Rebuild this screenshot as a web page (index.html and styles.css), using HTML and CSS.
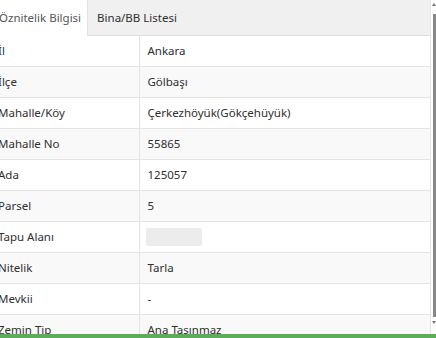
FILE: index.html
```html
<!DOCTYPE html>
<html lang="tr">
<head>
    <meta charset="UTF-8">
    <meta name="viewport" content="width=device-width, initial-scale=1.0">
    <title>Parsel Bilgisi</title>
    <link rel="stylesheet" href="styles.css">
</head>
<body>
    <div class="frame">
        <div class="panel">
            <ul class="tabs">
                <li class="tab active">Öznitelik Bilgisi</li>
                <li class="tab">Bina/BB Listesi</li>
            </ul>

            <table class="info">
                <tbody>
                    <tr><td>İl</td><td>Ankara</td></tr>
                    <tr><td>İlçe</td><td>Gölbaşı</td></tr>
                    <tr><td>Mahalle/Köy</td><td>Çerkezhöyük(Gökçehüyük)</td></tr>
                    <tr><td>Mahalle No</td><td>55865</td></tr>
                    <tr><td>Ada</td><td>125057</td></tr>
                    <tr><td>Parsel</td><td>5</td></tr>
                    <tr><td>Tapu Alanı</td><td><span class="blurred"></span></td></tr>
                    <tr><td>Nitelik</td><td>Tarla</td></tr>
                    <tr><td>Mevkii</td><td>-</td></tr>
                    <tr><td>Zemin Tip</td><td>Ana Taşınmaz</td></tr>
                </tbody>
            </table>
        </div>

        <div class="scrollbar">
            <span class="arrow up"></span>
            <span class="thumb"></span>
            <span class="arrow down"></span>
        </div>
    </div>

    <div class="footer-bar"></div>
</body>
</html>
```

FILE: styles.css
```css
* {
    margin: 0;
    padding: 0;
    box-sizing: border-box;
}

html, body {
    height: 100%;
    overflow: hidden;
}

body {
    font-family: 'Noto Sans', 'Open Sans', sans-serif;
    font-size: 11.5px;
    color: #2f2f2f;
    background: #fff;
}

.frame {
    display: flex;
    height: 100%;
}

.panel {
    flex: 1;
    margin-left: -10px;
    border-right: 1px solid #e6e6e6;
}

.tabs {
    list-style: none;
    display: flex;
    height: 36px;
    background: #f0f0f0;
    border-bottom: 1px solid #dedede;
}

.tab {
    padding: 0 10px 0 9px;
    line-height: 35px;
    font-size: 11.5px;
    color: #2f2f2f;
}

.tab.active {
    background: #fff;
    color: #555;
    padding: 0 6px 0 9px;
    border-right: 1px solid #e2e2e2;
    height: 36px;
}

.info {
    width: 100%;
    border-collapse: collapse;
}

.info td {
    padding: 6px 8px;
    line-height: 18px;
    border-bottom: 1px solid #e4e4e4;
    vertical-align: middle;
}

.info td:first-child {
    width: 149px;
    border-right: 1px solid #e4e4e4;
}

.info tr:nth-child(even) td {
    background: #f9f9f9;
}

.blurred {
    display: block;
    width: 56px;
    height: 18px;
    margin-left: -2px;
    background: #ececec;
    border-radius: 2px;
}

.scrollbar {
    width: 5px;
    display: flex;
    flex-direction: column;
    align-items: flex-end;
    padding: 3px 0 14px;
}

.arrow {
    width: 0;
    height: 0;
    border-left: 2px solid transparent;
    border-right: 2px solid transparent;
}

.arrow.up {
    border-bottom: 3px solid #777;
}

.arrow.down {
    border-top: 3px solid #777;
}

.thumb {
    flex: 1;
    width: 3px;
    margin: 8px 0 4px;
    background: #888;
}

.footer-bar {
    position: fixed;
    left: 0;
    right: 0;
    bottom: 0;
    height: 4px;
    background: #5cac5c;
}
```
